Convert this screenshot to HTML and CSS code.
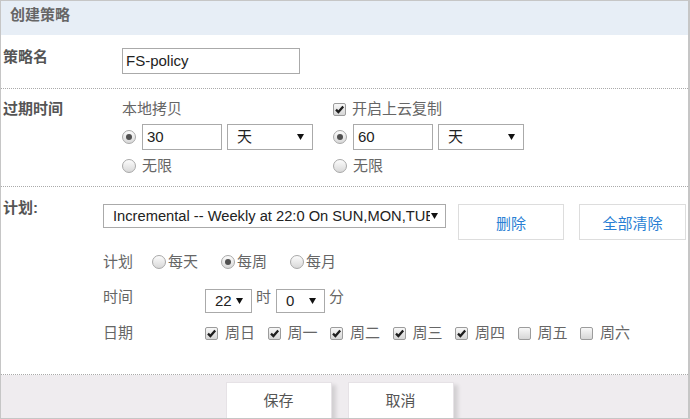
FILE: index.html
```html
<!DOCTYPE html>
<html>
<head>
<meta charset="utf-8">
<link rel="stylesheet" href="styles.css">
</head>
<body>
<div class="dialog">
  <div class="head">创建策略</div>

  <div class="row row-name">
    <div class="label">策略名</div>
    <div class="field name-field">FS-policy</div>
  </div>

  <div class="row row-expire">
    <div class="label">过期时间</div>
    <div class="col">
      <div class="line">本地拷贝</div>
      <div class="line ctrl">
        <span class="radio on"></span>
        <span class="field num">30</span>
        <span class="select unit"><span class="sel-text">天</span><span class="caret"></span></span>
      </div>
      <div class="line"><span class="radio"></span><span>无限</span></div>
    </div>
    <div class="col col-right">
      <div class="line"><span class="check on"><svg viewBox="0 0 11 11" width="11" height="11"><path d="M2 5.6 L4.4 8 L9.2 2.6" fill="none" stroke="#1e1e1e" stroke-width="2.3"/></svg></span><span class="check-text">开启上云复制</span></div>
      <div class="line ctrl">
        <span class="radio on"></span>
        <span class="field num">60</span>
        <span class="select unit"><span class="sel-text">天</span><span class="caret"></span></span>
      </div>
      <div class="line"><span class="radio"></span><span>无限</span></div>
    </div>
  </div>

  <div class="row row-plan">
    <div class="label label-plan">计划:</div>
    <div class="plan">
      <div class="plan-top">
        <span class="select wide"><span class="sel-text">Incremental -- Weekly at 22:0 On SUN,MON,TUE</span><span class="caret"></span></span>
        <span class="btn btn-del">删除</span>
        <span class="btn btn-clear">全部清除</span>
      </div>
      <div class="sub sub-type">
        <span class="sub-label">计划</span>
        <span class="ropt"><span class="radio"></span><span>每天</span></span>
        <span class="ropt"><span class="radio on"></span><span>每周</span></span>
        <span class="ropt"><span class="radio"></span><span>每月</span></span>
      </div>
      <div class="sub sub-time">
        <span class="sub-label wide-label">时间</span>
        <span class="select small hour"><span class="sel-text">22</span><span class="caret"></span></span>
        <span class="unit-text">时</span>
        <span class="select small minute"><span class="sel-text">0</span><span class="caret"></span></span>
        <span class="unit-text">分</span>
      </div>
      <div class="sub sub-date">
        <span class="sub-label wide-label">日期</span>
        <span class="day"><span class="check on"><svg viewBox="0 0 11 11" width="11" height="11"><path d="M2 5.6 L4.4 8 L9.2 2.6" fill="none" stroke="#1e1e1e" stroke-width="2.3"/></svg></span><span>周日</span></span>
        <span class="day"><span class="check on"><svg viewBox="0 0 11 11" width="11" height="11"><path d="M2 5.6 L4.4 8 L9.2 2.6" fill="none" stroke="#1e1e1e" stroke-width="2.3"/></svg></span><span>周一</span></span>
        <span class="day"><span class="check on"><svg viewBox="0 0 11 11" width="11" height="11"><path d="M2 5.6 L4.4 8 L9.2 2.6" fill="none" stroke="#1e1e1e" stroke-width="2.3"/></svg></span><span>周二</span></span>
        <span class="day"><span class="check on"><svg viewBox="0 0 11 11" width="11" height="11"><path d="M2 5.6 L4.4 8 L9.2 2.6" fill="none" stroke="#1e1e1e" stroke-width="2.3"/></svg></span><span>周三</span></span>
        <span class="day"><span class="check on"><svg viewBox="0 0 11 11" width="11" height="11"><path d="M2 5.6 L4.4 8 L9.2 2.6" fill="none" stroke="#1e1e1e" stroke-width="2.3"/></svg></span><span>周四</span></span>
        <span class="day"><span class="check"></span><span>周五</span></span>
        <span class="day"><span class="check"></span><span>周六</span></span>
      </div>
    </div>
  </div>

  <div class="foot">
    <span class="fbtn">保存</span>
    <span class="fbtn">取消</span>
  </div>
</div>
</body>
</html>
```

FILE: styles.css
```css
* { box-sizing: border-box; }
html, body { margin: 0; padding: 0; background: #fff; }
body {
  font-family: "Liberation Sans", "Noto Sans CJK SC", sans-serif;
  font-size: 15px;
  color: #666;
}
.dialog {
  width: 690px;
  height: 419px;
  border: 1px solid #c6c6c6;
  border-right-width: 2px;
  display: flex;
  flex-direction: column;
  overflow: hidden;
}
.head {
  height: 34px;
  flex: none;
  background: #e7eef6;
  padding-left: 9px;
  font-weight: bold;
  line-height: 27px;
  color: #666;
}
.row {
  display: flex;
  align-items: flex-start;
  border-bottom: 1px dotted #aaa;
  padding-left: 2px;
  flex: none;
}
.label {
  width: 119px;
  flex: none;
  font-weight: bold;
  color: #555;
  line-height: 18px;
}
.row-name { height: 54px; padding-top: 13px; }
.field {
  height: 26px;
  border: 1px solid #aaa;
  padding-left: 3px;
  line-height: 24px;
  color: #222;
  background: #fff;
}
.name-field { width: 178px; }

.row-expire { height: 98px; padding-top: 11px; }
.col { display: flex; flex-direction: column; width: 191px; }
.col-right { margin-left: 20px; }
.line { height: 18px; line-height: 18px; display: flex; align-items: center; }
.line.ctrl { height: 26px; margin: 6px 0 7px; }
.line .radio { margin-right: 6px; }
.num { width: 80px; padding-left: 4px; flex: none; }

.radio {
  width: 14px;
  height: 14px;
  flex: none;
  border-radius: 50%;
  border: 1px solid #a8a8a8;
  background: linear-gradient(#fcfcfc, #d8d8d8);
  position: relative;
}
.radio.on::after {
  content: "";
  position: absolute;
  left: 3px;
  top: 3px;
  width: 6px;
  height: 6px;
  border-radius: 50%;
  background: #505050;
}
.check {
  width: 13px;
  height: 13px;
  flex: none;
  border: 1px solid #9c9c9c;
  border-radius: 2px;
  background: linear-gradient(#f8f8f8, #d6d6d6);
  display: flex;
  align-items: center;
  justify-content: center;
}
.check svg { display: block; }
.check-text { margin-left: 6px; }

.select {
  display: flex;
  align-items: center;
  border: 1px solid #aaa;
  padding: 0 8px 0 9px;
  color: #222;
  background: #fff;
  flex: none;
}
.sel-text { flex: 1; white-space: nowrap; overflow: hidden; min-width: 0; }
.caret {
  width: 7px;
  height: 6px;
  flex: none;
  background: #111;
  clip-path: polygon(0 0, 100% 0, 50% 100%);
}
.unit { width: 86px; height: 26px; margin-left: 5px; }

.row-plan { height: 188px; padding-top: 12px; }
.label-plan { width: 100px; }
.plan { margin-top: 5px; display: flex; flex-direction: column; }
.plan-top { display: flex; align-items: flex-start; height: 36px; }
.wide { width: 343px; height: 24px; padding-right: 7px; font-size: 14.7px; }
.wide .caret { margin-left: 1px; }
.btn {
  height: 36px;
  border: 1px solid #ddd;
  color: #2a7fd4;
  display: flex;
  align-items: center;
  justify-content: center;
  flex: none;
}
.btn-del { width: 106px; margin-left: 12px; }
.btn-clear { width: 107px; margin-left: 15px; }

.sub { display: flex; align-items: flex-start; line-height: 18px; }
.sub-label { width: 49px; flex: none; }
.sub-label.wide-label { width: 102px; }
.sub-type { margin-top: 13px; }
.ropt { display: flex; align-items: center; margin-right: 23px; height: 18px; }
.ropt .radio { margin-right: 2px; }
.sub-time { margin-top: 17px; }
.small { height: 24px; margin-top: 1px; }
.hour { width: 47px; }
.minute { width: 49px; margin-left: 5px; }
.unit-text { margin-left: 4px; }
.sub-date { margin-top: 11px; }
.day { display: flex; align-items: center; height: 18px; width: 62.5px; flex: none; }
.day .check { margin-right: 7px; }

.foot {
  flex: 1;
  background: #efecef;
  display: flex;
  justify-content: center;
  align-items: flex-start;
  padding-top: 7px;
  padding-right: 10px;
  gap: 16px;
}
.fbtn {
  width: 106px;
  height: 40px;
  flex: none;
  background: #fff;
  border: 1px solid #e6e2e6;
  color: #555;
  text-align: center;
  line-height: 36px;
  box-shadow: 4px 3px 4px rgba(0, 0, 0, 0.12);
}
```
